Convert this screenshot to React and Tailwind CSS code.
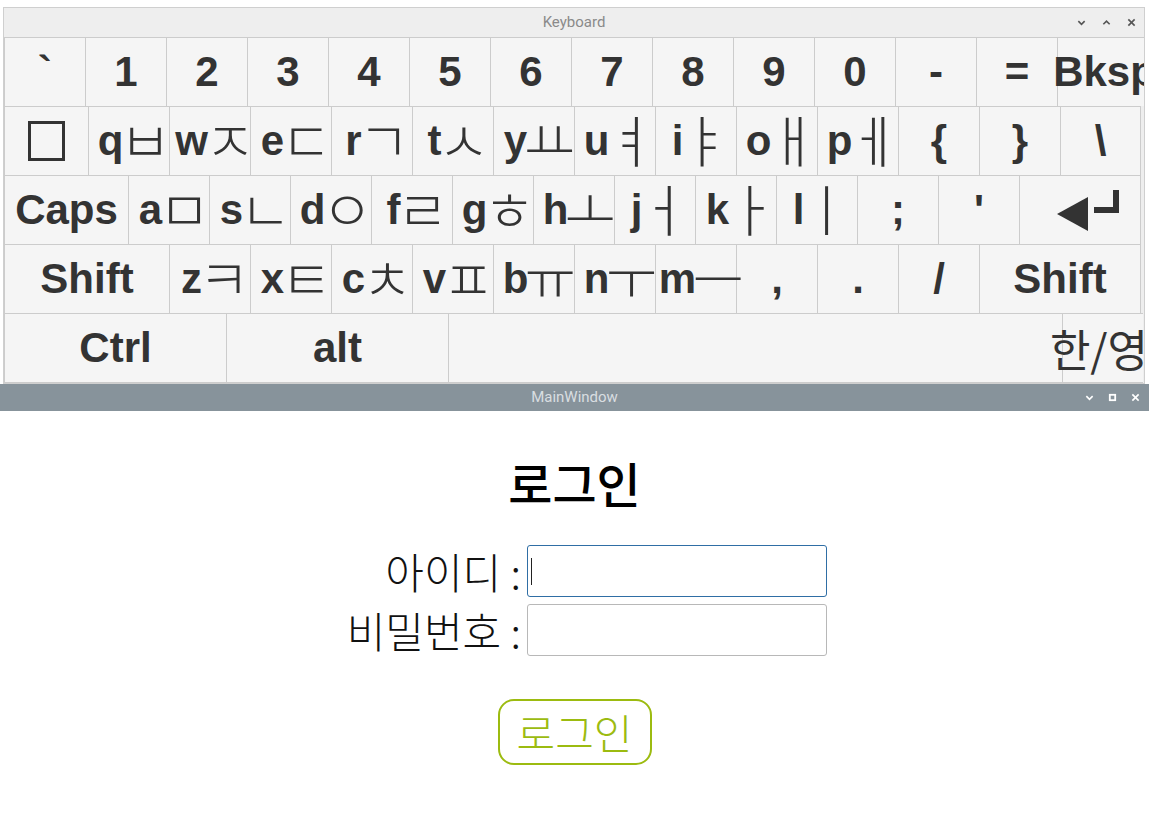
import React from "react";
import clsx from "clsx";

function Key({ w = "w-[81px]", last = false, bottom = false, className = "", children }) {
  return (
    <div
      className={clsx(
        "shrink-0 h-full flex items-center justify-center border-l border-t border-[#cccccc] bg-[#f5f5f5] whitespace-nowrap",
        w,
        last && "border-r",
        bottom && "border-b",
        className
      )}
    >
      {children}
    </div>
  );
}

function J({ children }) {
  return (
    <span className="flex justify-center shrink-0 w-[30px] ml-[7px] font-['Noto_Sans_CJK_KR',sans-serif] font-light text-[56px] leading-[42px] relative top-[-3px]">
      {children}
    </span>
  );
}

function LK({ l, j, w }) {
  return (
    <Key w={w}>
      <span>{l}</span>
      {j ? <J>{j}</J> : null}
    </Key>
  );
}

function ChevronDown({ className }) {
  return (
    <svg viewBox="0 0 10 10" className={className} fill="none" stroke="currentColor" strokeWidth="1.8">
      <polyline points="1.5,3.5 5,7 8.5,3.5" />
    </svg>
  );
}
function ChevronUp({ className }) {
  return (
    <svg viewBox="0 0 10 10" className={className} fill="none" stroke="currentColor" strokeWidth="1.8">
      <polyline points="1.5,7 5,3.5 8.5,7" />
    </svg>
  );
}
function XIcon({ className }) {
  return (
    <svg viewBox="0 0 10 10" className={className} fill="none" stroke="currentColor" strokeWidth="1.8">
      <line x1="1.5" y1="1.5" x2="8.5" y2="8.5" />
      <line x1="8.5" y1="1.5" x2="1.5" y2="8.5" />
    </svg>
  );
}
function SquareIcon({ className }) {
  return (
    <svg viewBox="0 0 10 10" className={className} fill="none" stroke="currentColor" strokeWidth="2">
      <rect x="2" y="2" width="6" height="6" />
    </svg>
  );
}

function EnterGlyph() {
  return (
    <svg viewBox="0 0 62 41" className="w-[62px] h-[41px]" fill="#333333">
      <polygon points="0,24 31,7 31,41" />
      <rect x="37" y="17" width="25" height="6" />
      <rect x="56" y="0" width="6" height="23" />
    </svg>
  );
}

export default function App() {
  const row2 = [
    ["q", "ㅂ"], ["w", "ㅈ"], ["e", "ㄷ"], ["r", "ㄱ"], ["t", "ㅅ"], ["y", "ㅛ"],
    ["u", "ㅕ"], ["i", "ㅑ"], ["o", "ㅐ"], ["p", "ㅔ"], ["{", ""], ["}", ""],
  ];
  const row3 = [
    ["a", "ㅁ"], ["s", "ㄴ"], ["d", "ㅇ"], ["f", "ㄹ"], ["g", "ㅎ"], ["h", "ㅗ"],
    ["j", "ㅓ"], ["k", "ㅏ"], ["l", "ㅣ"], [";", ""], ["'", ""],
  ];
  const row4 = [
    ["z", "ㅋ"], ["x", "ㅌ"], ["c", "ㅊ"], ["v", "ㅍ"], ["b", "ㅠ"], ["n", "ㅜ"],
    ["m", "ㅡ"], [",", ""], [".", ""], ["/", ""],
  ];
  const row1 = ["`", "1", "2", "3", "4", "5", "6", "7", "8", "9", "0", "-", "="];

  return (
    <div className="w-[1149px] h-[815px] bg-white overflow-hidden flex flex-col">
      {/* Keyboard window */}
      <div className="ml-[3px] mt-[7px] w-[1142px] border border-[#cfcfcf] bg-[#eeeeee] shrink-0">
        <div className="h-[29px] grid grid-cols-[1fr_auto_1fr] items-center">
          <div />
          <div className="font-['Roboto',sans-serif] text-[15px] text-[#8a8a8a] leading-none">Keyboard</div>
          <div className="flex justify-end items-center gap-[16px] pr-[8px] text-[#555555]">
            <ChevronDown className="w-[9px] h-[9px]" />
            <ChevronUp className="w-[9px] h-[9px]" />
            <XIcon className="w-[9px] h-[9px]" />
          </div>
        </div>
        <div className="overflow-hidden flex flex-col font-['Liberation_Sans','Noto_Sans_CJK_KR',sans-serif] font-bold text-[42px] leading-none text-[#333333]">
          {/* Row 1 */}
          <div className="flex h-[69px]">
            {row1.map((k) => (
              <LK key={k} l={k} />
            ))}
            <Key w="w-[94px]">
              <span>Bksp</span>
            </Key>
          </div>
          {/* Row 2 */}
          <div className="flex h-[69px]">
            <Key w="w-[84px]">
              <div className="w-[37px] h-[40px] border-[3px] border-[#333333]" />
            </Key>
            {row2.map(([l, j]) => (
              <LK key={l} l={l} j={j} />
            ))}
            <Key last>
              <span>\</span>
            </Key>
          </div>
          {/* Row 3 */}
          <div className="flex h-[69px]">
            <Key w="w-[124px]">
              <span>Caps</span>
            </Key>
            {row3.map(([l, j]) => (
              <LK key={l} l={l} j={j} />
            ))}
            <Key w="w-[122px]" last className="pl-[16px]">
              <EnterGlyph />
            </Key>
          </div>
          {/* Row 4 */}
          <div className="flex h-[69px]">
            <Key w="w-[165px]">
              <span>Shift</span>
            </Key>
            {row4.map(([l, j]) => (
              <LK key={l} l={l} j={j} />
            ))}
            <Key w="w-[162px]" last>
              <span>Shift</span>
            </Key>
          </div>
          {/* Row 5 */}
          <div className="flex h-[70px]">
            <Key w="w-[222px]" bottom>
              <span>Ctrl</span>
            </Key>
            <Key w="w-[222px]" bottom>
              <span>alt</span>
            </Key>
            <Key w="w-[614px]" bottom />
            <Key w="w-[81px]" bottom className="pr-[8px]">
              <span className="font-['Noto_Sans_CJK_KR',sans-serif] font-normal text-[44px]">한/영</span>
            </Key>
          </div>
        </div>
      </div>

      {/* Main window title bar */}
      <div className="h-[27px] bg-[#87939b] grid grid-cols-[1fr_auto_1fr] items-center shrink-0">
        <div />
        <div className="font-['Roboto',sans-serif] text-[15px] text-[#d9dee1] leading-none">MainWindow</div>
        <div className="flex justify-end items-center gap-[14px] pr-[9px] text-white">
          <ChevronDown className="w-[9px] h-[9px]" />
          <SquareIcon className="w-[9px] h-[9px]" />
          <XIcon className="w-[9px] h-[9px]" />
        </div>
      </div>

      {/* Main content */}
      <div className="flex-1 bg-white flex flex-col font-['Noto_Sans_CJK_KR',sans-serif]">
        <div className="mt-[47px] text-center text-[48px] leading-none font-medium text-black">로그인</div>
        <div className="mt-[39px] ml-[341px] grid grid-cols-[180px_300px] gap-x-[6px] gap-y-[7px] text-[42px] leading-none font-light text-[#111111]">
          <div className="h-[52px] flex items-center justify-end whitespace-nowrap">아이디 :</div>
          <div className="h-[52px] border border-[#2f6ea5] rounded-[3px] bg-white flex items-center pl-[3px]">
            <div className="w-px h-[27px] bg-[#222222]" />
          </div>
          <div className="h-[52px] flex items-center justify-end whitespace-nowrap">비밀번호 :</div>
          <div className="h-[52px] border border-[#b8b8b8] rounded-[3px] bg-white" />
        </div>
        <div className="mt-[43px] mx-auto w-[154px] h-[66px] border-2 border-[#9cbb10] rounded-[16px] flex items-center justify-center text-[42px] leading-none font-light text-[#9cbb10]">
          로그인
        </div>
      </div>
    </div>
  );
}
